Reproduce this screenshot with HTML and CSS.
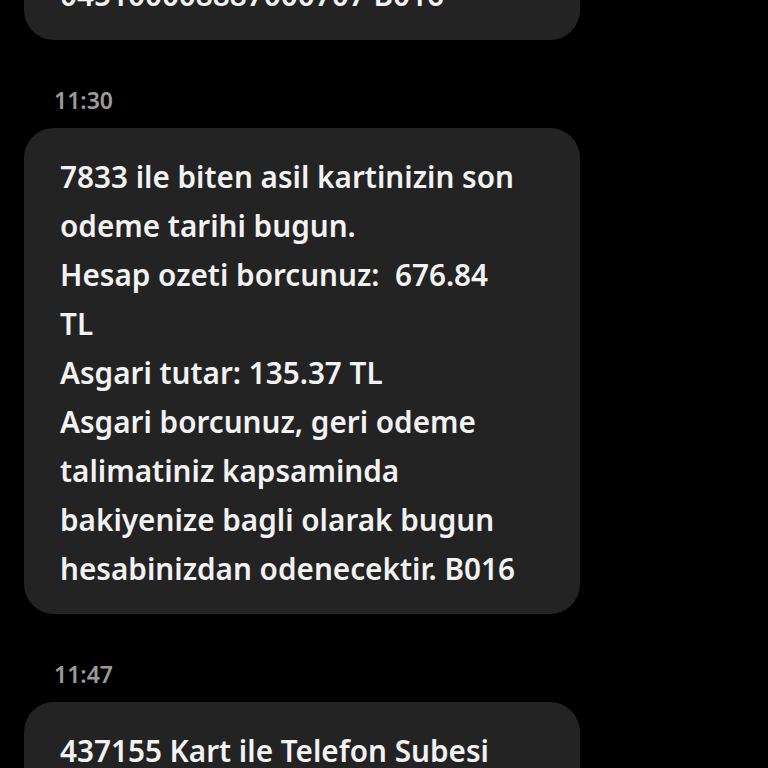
FILE: index.html
```html
<!DOCTYPE html>
<html>
<head>
<meta charset="utf-8">
<link rel="stylesheet" href="styles.css">
</head>
<body>
<div class="thread">
  <div class="bubble first">045100008887000707 B016</div>
  <div class="time">11:30</div>
  <div class="bubble">7833 ile biten asil kartinizin son<br>odeme tarihi bugun.<br>Hesap ozeti borcunuz:&nbsp; 676.84<br>TL<br>Asgari tutar: 135.37 TL<br>Asgari borcunuz, geri odeme<br>talimatiniz kapsaminda<br>bakiyenize bagli olarak bugun<br>hesabinizdan odenecektir. B016</div>
  <div class="time">11:47</div>
  <div class="bubble">437155 Kart ile Telefon Subesi</div>
</div>
</body>
</html>
```
FILE: styles.css
```css
html, body {
  margin: 0;
  padding: 0;
  background: #000;
  height: 768px;
  overflow: hidden;
}
.thread {
  display: flex;
  flex-direction: column;
  align-items: flex-start;
  padding-left: 24px;
  font-family: "Noto Sans", "Open Sans", sans-serif;
}
.bubble {
  width: 556px;
  box-sizing: border-box;
  background: #232323;
  border-radius: 30px;
  padding: 24px 20px 21px 36px;
  color: #f2f2f2;
  font-size: 29.7px;
  font-weight: 600;
  line-height: 49px;
  white-space: nowrap;
}
.bubble.first {
  margin-top: -54px;
}
.time {
  margin: 46px 0 14px 30px;
  color: #9a9a9a;
  font-size: 23px;
  font-weight: 600;
  line-height: 28px;
}
```
